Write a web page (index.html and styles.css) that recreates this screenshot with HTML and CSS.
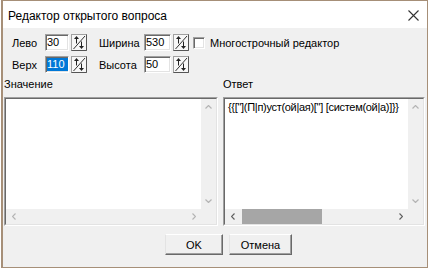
FILE: index.html
```html
<!DOCTYPE html>
<html lang="ru">
<head>
  <meta charset="UTF-8" />
  <title>Редактор открытого вопроса</title>
  <link rel="stylesheet" href="styles.css">
</head>
<body>

  <div class="window">
    <div class="titlebar">
      <span class="title">Редактор открытого вопроса</span>
      <svg class="close" width="11" height="11" viewBox="0 0 11 11">
        <path d="M0.5 0.5L10.5 10.5M10.5 0.5L0.5 10.5" stroke="#333" stroke-width="1.1" fill="none"/>
      </svg>
    </div>

    <div class="content">
      <div class="row">
        <span class="lbl lbl-a">Лево</span>
        <div class="edit edit-a">30</div>
        <svg class="spin" width="16" height="17" viewBox="0 0 16 17">
          <rect x="0.5" y="0.5" width="15" height="16" fill="#f7f7f7" stroke="#a0a0a0"/>
          <path d="M15.5 0.5V16.5H0.5" stroke="#555" fill="none"/>
          <path d="M2.5 15L14 2" stroke="#333" fill="none"/>
          <path d="M5.5 4V9.5" stroke="#222" fill="none"/>
          <path d="M3 5L5.5 2L8 5Z" fill="#222"/>
          <path d="M10.5 7.5V13" stroke="#222" fill="none"/>
          <path d="M8 12L10.5 15L13 12Z" fill="#222"/>
        </svg>
        <span class="lbl lbl-b">Ширина</span>
        <div class="edit edit-b">530</div>
        <svg class="spin" width="16" height="17" viewBox="0 0 16 17">
          <rect x="0.5" y="0.5" width="15" height="16" fill="#f7f7f7" stroke="#a0a0a0"/>
          <path d="M15.5 0.5V16.5H0.5" stroke="#555" fill="none"/>
          <path d="M2.5 15L14 2" stroke="#333" fill="none"/>
          <path d="M5.5 4V9.5" stroke="#222" fill="none"/>
          <path d="M3 5L5.5 2L8 5Z" fill="#222"/>
          <path d="M10.5 7.5V13" stroke="#222" fill="none"/>
          <path d="M8 12L10.5 15L13 12Z" fill="#222"/>
        </svg>
        <span class="check"></span>
        <span class="check-label">Многострочный редактор</span>
      </div>

      <div class="row">
        <span class="lbl lbl-a">Верх</span>
        <div class="edit edit-a"><span class="sel">110</span></div>
        <svg class="spin" width="16" height="17" viewBox="0 0 16 17">
          <rect x="0.5" y="0.5" width="15" height="16" fill="#f7f7f7" stroke="#a0a0a0"/>
          <path d="M15.5 0.5V16.5H0.5" stroke="#555" fill="none"/>
          <path d="M2.5 15L14 2" stroke="#333" fill="none"/>
          <path d="M5.5 4V9.5" stroke="#222" fill="none"/>
          <path d="M3 5L5.5 2L8 5Z" fill="#222"/>
          <path d="M10.5 7.5V13" stroke="#222" fill="none"/>
          <path d="M8 12L10.5 15L13 12Z" fill="#222"/>
        </svg>
        <span class="lbl lbl-b">Высота</span>
        <div class="edit edit-b">50</div>
        <svg class="spin" width="16" height="17" viewBox="0 0 16 17">
          <rect x="0.5" y="0.5" width="15" height="16" fill="#f7f7f7" stroke="#a0a0a0"/>
          <path d="M15.5 0.5V16.5H0.5" stroke="#555" fill="none"/>
          <path d="M2.5 15L14 2" stroke="#333" fill="none"/>
          <path d="M5.5 4V9.5" stroke="#222" fill="none"/>
          <path d="M3 5L5.5 2L8 5Z" fill="#222"/>
          <path d="M10.5 7.5V13" stroke="#222" fill="none"/>
          <path d="M8 12L10.5 15L13 12Z" fill="#222"/>
        </svg>
      </div>

      <div class="panels">
        <div class="panel panel-left">
          <div class="caption">Значение</div>
          <div class="memo">
            <div class="memo-grid">
              <div class="memo-text"></div>
              <div class="vscroll">
                <div class="sb-btn"><svg width="7" height="4" viewBox="0 0 7 4"><path d="M0.5 3.5L3.5 0.5L6.5 3.5" class="off"/></svg></div>
                <div class="sb-btn"><svg width="7" height="4" viewBox="0 0 7 4"><path d="M0.5 0.5L3.5 3.5L6.5 0.5" class="off"/></svg></div>
              </div>
              <div class="hscroll">
                <div class="sb-btn"><svg width="4" height="7" viewBox="0 0 4 7"><path d="M3.5 0.5L0.5 3.5L3.5 6.5" class="off"/></svg></div>
                <div class="sb-btn"><svg width="4" height="7" viewBox="0 0 4 7"><path d="M0.5 0.5L3.5 3.5L0.5 6.5" class="off"/></svg></div>
              </div>
              <div class="corner"></div>
            </div>
          </div>
        </div>

        <div class="panel panel-right">
          <div class="caption">Ответ</div>
          <div class="memo">
            <div class="memo-grid">
              <div class="memo-text answer">{{["](П|п)уст(ой|ая)["] [систем(ой|а)]}}</div>
              <div class="vscroll">
                <div class="sb-btn"><svg width="7" height="4" viewBox="0 0 7 4"><path d="M0.5 3.5L3.5 0.5L6.5 3.5" class="off"/></svg></div>
                <div class="sb-btn"><svg width="7" height="4" viewBox="0 0 7 4"><path d="M0.5 0.5L3.5 3.5L6.5 0.5" class="off"/></svg></div>
              </div>
              <div class="hscroll">
                <div class="sb-btn"><svg width="4" height="7" viewBox="0 0 4 7"><path d="M3.5 0.5L0.5 3.5L3.5 6.5" class="on"/></svg></div>
                <div class="thumb"></div>
                <div class="sb-btn"><svg width="4" height="7" viewBox="0 0 4 7"><path d="M0.5 0.5L3.5 3.5L0.5 6.5" class="on"/></svg></div>
              </div>
              <div class="corner"></div>
            </div>
          </div>
        </div>
      </div>

      <div class="buttons">
        <button class="btn btn-ok">OK</button>
        <button class="btn btn-cancel">Отмена</button>
      </div>
    </div>
  </div>

</body>
</html>
```

FILE: styles.css
```css
* {
  box-sizing: border-box;
}
body {
  margin: 0;
  background: #fff;
  font-family: "Liberation Sans", Arial, sans-serif;
  font-size: 11px;
  color: #000;
}
.window {
  margin-left: 1px;
  width: 427px;
  height: 268px;
  border: 1px solid #a68f78;
  border-left-width: 2px;
  background: #f0f0f0;
  display: flex;
  flex-direction: column;
}
.titlebar {
  height: 27px;
  flex: none;
  background: #fff;
  display: flex;
  align-items: center;
  padding: 2px 8px 0 5px;
  font-size: 12px;
}
.close {
  margin-left: auto;
}
.content {
  flex: 1;
  padding: 6px 2px 0 1px;
}
.row {
  display: flex;
  align-items: center;
  height: 17px;
  padding-left: 8px;
  margin-bottom: 5px;
}
.lbl-a {
  width: 33px;
}
.lbl-b {
  width: 45px;
  margin-left: 12px;
}
.edit {
  height: 17px;
  background: #fff;
  border: 1px solid;
  border-color: #a0a0a0 #fff #fff #a0a0a0;
  box-shadow: inset 1px 1px #696969, inset -1px -1px #e3e3e3;
  padding-left: 1px;
  line-height: 15px;
  overflow: hidden;
  white-space: nowrap;
}
.edit-a {
  width: 24px;
}
.edit-b {
  width: 27px;
}
.sel {
  display: block;
  margin: 1px 0 1px 0;
  height: 13px;
  line-height: 13px;
  background: #0078d7;
  color: #fff;
}
.spin {
  margin-left: 2px;
  flex: none;
}
.check {
  width: 12px;
  height: 12px;
  margin-left: 4px;
  background: #fff;
  border: 1px solid;
  border-color: #a0a0a0 #fff #fff #a0a0a0;
  box-shadow: inset 1px 1px #696969, inset -1px -1px #e3e3e3;
}
.check-label {
  margin-left: 5px;
}
.panels {
  display: flex;
  gap: 5px;
  margin-top: 4px;
}
.panel-left {
  width: 214px;
}
.panel-right {
  width: 202px;
}
.caption {
  height: 13px;
  line-height: 13px;
  margin-bottom: 6px;
}
.memo {
  height: 129px;
  border: 1px solid;
  border-color: #a0a0a0 #fff #fff #a0a0a0;
}
.memo-grid {
  height: 100%;
  border: 1px solid;
  border-color: #696969 #e3e3e3 #e3e3e3 #696969;
  display: grid;
  grid-template-columns: 1fr 15px;
  grid-template-rows: 1fr 15px;
}
.memo-text {
  background: #fff;
  padding: 2px 0 0 3px;
  line-height: 13px;
  white-space: nowrap;
  overflow: hidden;
}
.answer {
  letter-spacing: -0.3px;
}
.vscroll {
  background: #f0f0f0;
  display: flex;
  flex-direction: column;
  justify-content: space-between;
}
.vscroll .sb-btn {
  height: 16px;
}
.hscroll {
  background: #f0f0f0;
  display: flex;
  align-items: stretch;
}
.hscroll .sb-btn {
  width: 15px;
}
.hscroll .sb-btn:last-child {
  margin-left: auto;
}
.sb-btn {
  display: flex;
  align-items: center;
  justify-content: center;
}
.sb-btn path {
  fill: none;
  stroke-width: 1.2;
}
.sb-btn .off {
  stroke: #b4b4b4;
}
.sb-btn .on {
  stroke: #606060;
}
.thumb {
  width: 80px;
  margin-left: 2px;
  background: #a6a6a6;
}
.corner {
  background: #f0f0f0;
}
.buttons {
  display: flex;
  gap: 6px;
  padding-left: 161px;
  margin-top: 8px;
}
.btn {
  height: 21px;
  padding: 0;
  font-family: inherit;
  font-size: 11px;
  color: #000;
  background: #f0f0f0;
  border: 1px solid;
  border-color: #fff #696969 #696969 #e3e3e3;
  box-shadow: inset -1px -1px #a0a0a0;
}
.btn-ok {
  width: 58px;
}
.btn-cancel {
  width: 63px;
}
```
